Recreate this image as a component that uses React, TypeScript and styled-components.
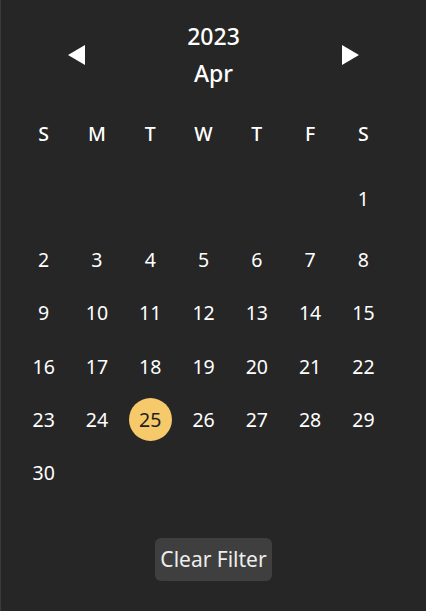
import React from "react";
import styled, { createGlobalStyle } from "styled-components";

const Global = createGlobalStyle`
  html, body { margin: 0; padding: 0; background: #262626; }
  body { font-family: "Noto Sans", "Open Sans", sans-serif; }
`;

const Page = styled.div`
  box-sizing: border-box;
  width: 426px;
  height: 611px;
  background: #262626;
  border-left: 1px solid #3b3b3b;
  color: #ffffff;
  display: flex;
  flex-direction: column;
  overflow: hidden;
`;

const Header = styled.div`
  display: flex;
  justify-content: center;
  align-items: center;
  gap: 101px;
  padding-top: 18px;
`;

const ArrowButton = styled.button`
  background: none;
  border: none;
  padding: 0;
  width: 18px;
  height: 20px;
  display: flex;
  align-items: center;
  justify-content: center;
  cursor: pointer;
`;

const Title = styled.div`
  display: flex;
  flex-direction: column;
  align-items: center;
  font-size: 23px;
  line-height: 37px;
  font-weight: 500;
  color: #ffffff;
`;

const Grid = styled.div`
  display: grid;
  grid-template-columns: repeat(7, 53.3px);
  margin-left: 16px;
  margin-top: 22px;
`;

const Cell = styled.div<{ $first?: boolean }>`
  box-sizing: border-box;
  height: ${(p) => (p.$first ? "80.85px" : "53.3px")};
  padding-bottom: ${(p) => (p.$first ? "13.35px" : "0")};
  display: flex;
  align-items: ${(p) => (p.$first ? "flex-end" : "center")};
  justify-content: center;
  font-size: 19.5px;
  color: #ffffff;
`;

const WeekDay = styled.div`
  height: 38px;
  display: flex;
  align-items: center;
  justify-content: center;
  font-size: 19.5px;
  font-weight: 500;
  color: #ffffff;
`;

const Day = styled.span<{ $active?: boolean }>`
  width: 43px;
  height: 43px;
  border-radius: 50%;
  display: flex;
  align-items: center;
  justify-content: center;
  background: ${(p) => (p.$active ? "#f6c96b" : "transparent")};
  color: ${(p) => (p.$active ? "#1f1f1f" : "#ffffff")};
`;

const Footer = styled.div`
  display: flex;
  justify-content: center;
  margin-top: 38.6px;
`;

const ClearButton = styled.button`
  font-family: "Noto Sans", "Open Sans", sans-serif;
  font-size: 21px;
  color: #eeeeee;
  background: #3f3f3f;
  border: none;
  border-radius: 6px;
  height: 43px;
  padding: 0 5px;
  line-height: 43px;
`;

const Triangle = ({ dir }: { dir: "left" | "right" }) => (
  <svg width="18" height="20" viewBox="0 0 18 20">
    {dir === "left" ? (
      <polygon points="17,0 17,20 0,10" fill="#ffffff" />
    ) : (
      <polygon points="1,0 1,20 18,10" fill="#ffffff" />
    )}
  </svg>
);

const weekDays = ["S", "M", "T", "W", "T", "F", "S"];

export default function App() {
  const first = 6;
  const cells: (number | null)[] = [];
  for (let i = 0; i < first; i++) cells.push(null);
  for (let d = 1; d <= 30; d++) cells.push(d);
  while (cells.length % 7) cells.push(null);
  const rows: (number | null)[][] = [];
  for (let i = 0; i < cells.length; i += 7) rows.push(cells.slice(i, i + 7));

  return (
    <>
      <Global />
      <Page>
        <Header>
          <ArrowButton aria-label="Previous month">
            <Triangle dir="left" />
          </ArrowButton>
          <Title>
            <span>2023</span>
            <span>Apr</span>
          </Title>
          <ArrowButton aria-label="Next month">
            <Triangle dir="right" />
          </ArrowButton>
        </Header>
        <Grid>
          {weekDays.map((w, i) => (
            <WeekDay key={"w" + i}>{w}</WeekDay>
          ))}
          {rows.map((r, ri) =>
            r.map((d, ci) => (
              <Cell key={ri + "-" + ci} $first={ri === 0}>
                {d !== null && <Day $active={d === 25}>{d}</Day>}
              </Cell>
            ))
          )}
        </Grid>
        <Footer>
          <ClearButton>Clear Filter</ClearButton>
        </Footer>
      </Page>
    </>
  );
}
